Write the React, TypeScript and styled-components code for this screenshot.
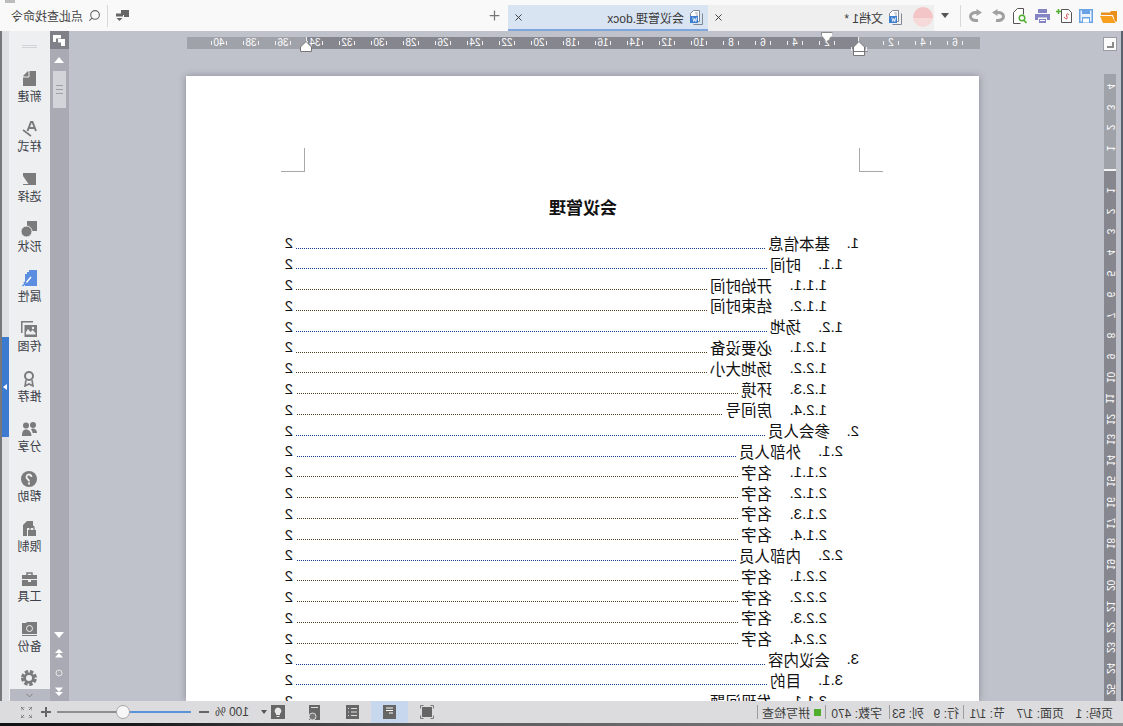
import styled, { createGlobalStyle } from 'styled-components';
import { Plus, Search, X, ChevronDown } from 'lucide-react';

const GlobalStyle = createGlobalStyle`
    html, body {
        margin: 0;
        padding: 0;
        overflow: hidden;
        background: #fff;
    }
    * {
        box-sizing: border-box;
    }
`;

const UI_FONT = '"Liberation Sans", "Noto Sans CJK SC", sans-serif';
const ICON = '#7b7b7b';

// the whole window is a mirror image, so it is laid out normally and flipped once here
const Mirror = styled.div`
    width: 1123px;
    height: 726px;
    overflow: hidden;
    transform: scaleX(-1);
    display: flex;
    flex-direction: column;
    font-family: ${UI_FONT};
    color: #333;
    background: #bfc2cb;
`;

const TitleBar = styled.header`
    position: relative;
    height: 31px;
    flex: none;
    display: flex;
    align-items: flex-end;
    background: #f9f9f9;

    &::after {
        content: '';
        position: absolute;
        top: 0;
        right: 5px;
        width: 10px;
        height: 3px;
        background: #bcbcbc;
    }
`;

const QuickBar = styled.div`
    width: 189px;
    height: 31px;
    flex: none;
    display: flex;
    align-items: center;
    padding-left: 6px;
`;

const QuickIcon = styled.span<{ $w: number }>`
    width: ${(p) => p.$w}px;
    flex: none;
    display: flex;
    align-items: center;
`;

const BarDivider = styled.span`
    width: 1px;
    height: 22px;
    background: #d8d8d8;
    flex: none;
`;

const Caret = styled.span<{ $small?: boolean }>`
    width: 0;
    height: 0;
    flex: none;
    margin-left: ${(p) => (p.$small ? 0 : 11)}px;
    border-left: ${(p) => (p.$small ? 3 : 4)}px solid transparent;
    border-right: ${(p) => (p.$small ? 3 : 4)}px solid transparent;
    border-top: ${(p) => (p.$small ? 4 : 5)}px solid #555;
`;

const Tab = styled.div<{ $active?: boolean; $w: number }>`
    width: ${(p) => p.$w}px;
    height: 26px;
    flex: none;
    display: flex;
    align-items: center;
    padding-left: ${(p) => (p.$active ? 5 : 0)}px;
    font-size: 12px;
    background: ${(p) => (p.$active ? '#d9e4f2' : '#efefef')};
    border-bottom: 2px solid ${(p) => (p.$active ? '#7ea6dd' : '#efefef')};
`;

const Avatar = styled.span`
    width: 20px;
    height: 20px;
    flex: none;
    margin: 0 11px 0 1px;
    border-radius: 50%;
    background: linear-gradient(#f4c5c6 55%, #f6d9d9 55%);
`;

const TabTitle = styled.span`
    margin-left: 5px;
    flex: 1;
    white-space: nowrap;
    color: #3a3a3a;
`;

const TabClose = styled.span`
    display: flex;
    margin-right: 5px;
    color: #333;
`;

const NewTab = styled.span`
    display: flex;
    margin-left: 6px;
    color: #777;
    align-self: center;
`;

const SearchBox = styled.div`
    margin-left: auto;
    height: 31px;
    display: flex;
    align-items: center;
    padding-right: 11px;
    font-size: 12px;
    color: #444;
`;

const SearchDivider = styled(BarDivider)`
    margin: 0 6px 0 8px;
`;

const SearchLabel = styled.span`
    margin-left: 5px;
    white-space: nowrap;
`;

const Body = styled.div`
    flex: 1;
    min-height: 0;
    display: flex;
    overflow: hidden;
`;

const Gutter = styled.div`
    width: 143px;
    flex: none;
    display: flex;
    flex-direction: column;
    padding-left: 4px;
    border-left: 2px solid #5d6270;
`;

const CornerButton = styled.div`
    width: 14px;
    height: 14px;
    margin-top: 6px;
    background: #fbfbfb;
    border: 1px solid #9b9da6;
    display: flex;
    align-items: flex-end;
    justify-content: flex-end;
    padding: 0 2px 2px 0;
`;

const CornerGlyph = styled.span`
    width: 7px;
    height: 6px;
    border-left: 2px solid #8a8a8a;
    border-bottom: 2px solid #8a8a8a;
    margin-right: 1px;
`;

const VRuler = styled.div`
    margin: 23px 0 0 1px;
    width: 12px;
    flex: 1;
    padding-top: 2px;
    display: flex;
    flex-direction: column;
    background: linear-gradient(#a0a2a9 95px, #f4f4f4 95px, #f4f4f4 97px, #85868e 97px);
    overflow: hidden;
`;

const VCell = styled.span`
    height: 20.8px;
    flex: none;
    display: flex;
    align-items: center;
    justify-content: center;
    font-size: 10px;
    color: #fff;
`;

const VLabel = styled.span`
    display: block;
    transform: rotate(-90deg);
    white-space: nowrap;
`;

const Canvas = styled.main`
    width: 911px;
    flex: none;
    display: flex;
    flex-direction: column;
`;

const HRuler = styled.div`
    position: relative;
    width: 793px;
    height: 12px;
    flex: none;
    margin-top: 6px;
    padding-left: 9px;
    display: flex;
    align-items: center;
    background: linear-gradient(
        90deg,
        #a0a2a9 121px,
        #f0f0f0 121px,
        #f0f0f0 122px,
        #85868e 122px,
        #85868e 673px,
        #f0f0f0 673px,
        #f0f0f0 674px,
        #a0a2a9 674px
    );
`;

const HCell = styled.span`
    position: relative;
    width: 32px;
    flex: none;
    text-align: center;
    font-size: 10px;
    line-height: 12px;
    color: #fff;

    &::before,
    &::after {
        content: '';
        position: absolute;
        top: 4px;
        width: 1px;
        height: 4px;
        background: #f0f0f0;
    }
    &::before {
        left: 8px;
    }
    &::after {
        right: 8px;
    }
`;

const Marker = styled.svg<{ $left: number; $top: number }>`
    position: absolute;
    left: ${(p) => p.$left}px;
    top: ${(p) => p.$top}px;
`;

const MarginTab = styled.span<{ $left: number }>`
    position: absolute;
    left: ${(p) => p.$left}px;
    top: 12px;
    width: 5px;
    height: 3px;
    border-right: 1px solid #8f9098;
    border-bottom: 1px solid #8f9098;
`;

const Page = styled.section`
    position: relative;
    width: 793px;
    flex: 1;
    margin: 27px 0 0 1px;
    padding: 120px 99px 0 120px;
    background: #fff;
    box-shadow: 0 0 7px rgba(70, 72, 84, 0.45);
    overflow: hidden;
    color: #111;
`;

const CropMark = styled.span<{ $side: 'left' | 'right' }>`
    position: absolute;
    top: 72px;
    ${(p) => (p.$side === 'left' ? 'left: 96px;' : 'left: 674px;')}
    width: 24px;
    height: 24px;
    border-bottom: 1px solid #a8a8a8;
    ${(p) => (p.$side === 'left' ? 'border-right: 1px solid #a8a8a8;' : 'border-left: 1px solid #a8a8a8;')}
`;

const DocTitle = styled.h1`
    margin: 0 22px 10.6px 0;
    height: 26px;
    line-height: 26px;
    text-align: center;
    font-size: 17px;
    font-weight: 700;
`;

const TocRow = styled.div<{ $level: number }>`
    height: 20.8px;
    display: flex;
    align-items: center;
    padding-left: ${(p) => (p.$level - 1) * 16}px;
    font-size: 15px;
    white-space: nowrap;
`;

const TocNumber = styled.span<{ $level: number }>`
    width: ${(p) => [29, 42, 55][p.$level - 1]}px;
    flex: none;
`;

const TocText = styled.span`
    font-size: 15.5px;
    flex: none;
`;

const TocLeader = styled.span<{ $level: number }>`
    flex: 1;
    align-self: flex-start;
    height: 1px;
    margin: 15px 3px 0 3px;
    background: repeating-linear-gradient(
        90deg,
        ${(p) => (p.$level === 3 ? '#4f3c1c' : '#0f3f8c')} 0 1px,
        transparent 1px 2px
    );
`;

const TocPage = styled.span`
    flex: none;
    width: 8px;
`;

const ScrollBar = styled.div`
    width: 19px;
    flex: none;
    display: flex;
    flex-direction: column;
    align-items: center;
    background: #a9aab4;
`;

const ScrollTop = styled.div`
    width: 100%;
    height: 18px;
    flex: none;
    background: #7f8088;
    display: flex;
    align-items: center;
    justify-content: center;
`;

const ScrollArrow = styled.div<{ $h: number }>`
    height: ${(p) => p.$h}px;
    flex: none;
    display: flex;
    align-items: center;
    justify-content: center;
`;

const ScrollThumb = styled.div`
    width: 13px;
    height: 37px;
    flex: none;
    background: #d3d4d9;
    display: flex;
    flex-direction: column;
    align-items: center;
    justify-content: center;
    gap: 3px;
`;

const ThumbLine = styled.span`
    width: 7px;
    height: 1px;
    background: #9d9ea6;
`;

const ScrollGap = styled.div`
    flex: 1;
`;

const SideBar = styled.nav`
    width: 41px;
    flex: none;
    display: flex;
    flex-direction: column;
    background: #eeeff1;
`;

const SideGrip = styled.div`
    height: 35px;
    flex: none;
    padding-top: 14px;
    display: flex;
    flex-direction: column;
    align-items: center;
    gap: 1px;
`;

const GripLine = styled.span`
    width: 15px;
    height: 1px;
    background: #d2d3d6;
`;

const SideItem = styled.div`
    height: 50px;
    flex: none;
    padding-top: 3px;
    display: flex;
    flex-direction: column;
    align-items: center;
`;

const SideIcon = styled.span`
    height: 19px;
    flex: none;
    display: flex;
    align-items: center;
    justify-content: center;
`;

const SideLabel = styled.span`
    height: 14px;
    margin-top: 2px;
    font-size: 12px;
    line-height: 14px;
    color: #3c4048;
    white-space: nowrap;
`;

const SideGear = styled.div`
    height: 23px;
    flex: none;
    display: flex;
    align-items: center;
    justify-content: center;
`;

const SideCollapse = styled.div`
    height: 12px;
    flex: none;
    margin-right: 1px;
    background: #b8bac3;
    color: #777;
    display: flex;
    align-items: center;
    justify-content: center;
`;

const HandleRail = styled.div`
    width: 7px;
    flex: none;
    background: #dfe0e3;
    padding-top: 306px;
`;

const Handle = styled.div`
    height: 100px;
    background: #3d7bd0;
    display: flex;
    align-items: center;
    justify-content: center;
`;

const HandleArrow = styled.span`
    width: 0;
    height: 0;
    border-top: 3px solid transparent;
    border-bottom: 3px solid transparent;
    border-left: 4px solid #fff;
`;

const WindowEdge = styled.div`
    width: 2px;
    flex: none;
    background: #77787c;
`;

const StatusBar = styled.footer`
    height: 22px;
    flex: none;
    display: flex;
    align-items: center;
    padding-left: 10px;
    background: #dcdcde;
    font-size: 12px;
    color: #3c3c3c;
    white-space: nowrap;
`;

const StatusField = styled.span<{ $w: number }>`
    width: ${(p) => p.$w}px;
    flex: none;
`;

const StatusDivider = styled.span<{ $gap: number }>`
    width: 1px;
    height: 14px;
    flex: none;
    margin-right: ${(p) => p.$gap}px;
    background: #9c9c9e;
`;

const SpellDot = styled.span`
    width: 7px;
    height: 7px;
    flex: none;
    margin-right: 4px;
    background: #4fae2e;
`;

const StatusSlot = styled.span<{ $ml: number; $active?: boolean; $w?: number }>`
    margin-left: ${(p) => p.$ml}px;
    ${(p) => (p.$w ? `width: ${p.$w}px;` : '')}
    height: 22px;
    flex: none;
    display: flex;
    align-items: center;
    justify-content: center;
    background: ${(p) => (p.$active ? '#c6d7ee' : 'transparent')};
`;

const ZoomSlider = styled.span`
    position: relative;
    width: 134px;
    height: 2px;
    margin-left: 8px;
    flex: none;
    background: linear-gradient(90deg, #5b93d8 68px, #8e8e90 68px);
`;

const ZoomKnob = styled.span`
    position: absolute;
    left: 61px;
    top: -6px;
    width: 14px;
    height: 14px;
    border-radius: 50%;
    background: #f7f7f7;
    border: 1px solid #a6a6a8;
`;

const ZoomBtn = styled.span`
    width: 10px;
    height: 10px;
    flex: none;
    display: flex;
    align-items: center;
    justify-content: center;
    margin-left: 6px;
    position: relative;
`;

const ZoomBar = styled.span<{ $vertical?: boolean }>`
    position: absolute;
    background: #666;
    ${(p) => (p.$vertical ? 'width: 2px; height: 10px;' : 'width: 10px; height: 2px;')}
`;

const BottomEdge = styled.div`
    height: 3px;
    flex: none;
    background: linear-gradient(90deg, #8c8c8c, #5b5b5b 60%, #1a1a1a 88%, #111);
`;

const toc: [number, string, string][] = [
    [1, '1.', '基本信息'],
    [2, '1.1.', '时间'],
    [3, '1.1.1.', '开始时间'],
    [3, '1.1.2.', '结束时间'],
    [2, '1.2.', '场地'],
    [3, '1.2.1.', '必要设备'],
    [3, '1.2.2.', '场地大小'],
    [3, '1.2.3.', '环境'],
    [3, '1.2.4.', '房间号'],
    [1, '2.', '参会人员'],
    [2, '2.1.', '外部人员'],
    [3, '2.1.1.', '名字'],
    [3, '2.1.2.', '名字'],
    [3, '2.1.3.', '名字'],
    [3, '2.1.4.', '名字'],
    [2, '2.2.', '内部人员'],
    [3, '2.2.1.', '名字'],
    [3, '2.2.2.', '名字'],
    [3, '2.2.3.', '名字'],
    [3, '2.2.4.', '名字'],
    [1, '3.', '会议内容'],
    [2, '3.1.', '目的'],
    [3, '3.1.1.', '发现问题'],
];

const hLabels = ['6', '4', '2', '', ...Array.from({ length: 20 }, (_, i) => String((i + 1) * 2))];
const vLabels = ['4', '3', '2', '1', '', ...Array.from({ length: 26 }, (_, i) => String(i + 1))];

const DocBadgeIcon = () => (
    <svg width="14" height="15" viewBox="0 0 14 15">
        <path d="M3.5 .5h6l3 3v8h-9z" fill="#fff" stroke="#7d8796" />
        <path d="M.5 3.5v11h9" fill="none" stroke="#7d8796" />
        <path d="M5 3h3M5 5h2" stroke="#a0a8b4" />
        <rect x="5" y="6" width="8" height="7" fill="#3f7fd0" />
        <path d="M6.2 7.5l1 4 1-3 1 3 1-4" fill="none" stroke="#fff" strokeWidth=".8" />
    </svg>
);

const FolderIcon = () => (
    <svg width="17" height="14" viewBox="0 0 17 14">
        <path d="M0 2h6l1 1.5h9V6H4L2 12.5H0z" fill="#e8901a" />
        <path d="M5 7h12l-3 7H1.500z" fill="#f99f1e" />
    </svg>
);

const SaveIcon = () => (
    <svg width="14" height="14" viewBox="0 0 14 14">
        <path d="M.75.75h12.500v12.500H.75z" fill="#eaf2fc" stroke="#6aa2e6" strokeWidth="1.500" />
        <path d="M3 1h8v4H3zM3 8h8v5H3z" fill="#6aa2e6" />
        <path d="M4 9.500h6v4H4z" fill="#fff" />
    </svg>
);

const NewDocIcon = () => (
    <svg width="16" height="15" viewBox="0 0 16 15">
        <path d="M3.500 1.500h7v13h-10v-10z" fill="#fff" stroke="#555" />
        <path d="M3 7c2-3 3 0 2 2s1 3 3 0" fill="none" stroke="#d2444a" />
        <path d="M11 3.500h5M13.500 1v5" stroke="#4fae2e" strokeWidth="1.500" />
    </svg>
);

const PrinterIcon = () => (
    <svg width="15" height="14" viewBox="0 0 15 14">
        <path d="M3 0h9v4H3z" fill="#8585c5" />
        <path d="M0 5h15v6h-3V8.500H3V11H0z" fill="#8585c5" />
        <path d="M4 10h7v4H4z" fill="#8585c5" />
        <path d="M5 11.500h5" stroke="#fff" />
    </svg>
);

const PreviewIcon = () => (
    <svg width="14" height="16" viewBox="0 0 14 16">
        <path d="M3.500.5h6l4 4v11h-7" fill="#fff" stroke="#555" />
        <path d="M3.500.5v6" stroke="#555" />
        <circle cx="5" cy="10" r="2.800" fill="none" stroke="#4fae2e" strokeWidth="1.400" />
        <path d="M3 12.500L.5 15" stroke="#4fae2e" strokeWidth="1.600" />
    </svg>
);

const TurnArrow = ({ back }: { back?: boolean }) => (
    <svg width="13" height="13" viewBox="0 0 13 13">
        <g transform={back ? 'translate(13 0) scale(-1 1)' : undefined}>
            <path d="M4 11.500C9 12 11.500 10 11.500 7.500S9 3.500 6 3.500H3" fill="none" stroke="#a0a0a0" strokeWidth="3" />
            <path d="M5.500 0L0 3.500 5.500 7z" fill="#a0a0a0" />
        </g>
    </svg>
);

const CommentIcon = () => (
    <svg width="13" height="11" viewBox="0 0 13 11">
        <path d="M0 0h8v5H5v2H0z" fill="#666" />
        <path d="M6 3.500h7v3H6z" fill="#666" />
        <path d="M6.500 8h6L9.500 11z" fill="#666" />
    </svg>
);

const PanelCornerIcon = () => (
    <svg width="12" height="11" viewBox="0 0 12 11">
        <path d="M4 0h8v7H9V3.500H4z" fill="#fff" />
        <path d="M0 4h7v3.500H4V11H0z" fill="#fff" />
    </svg>
);

const sideIcons: Record<string, React.ReactNode> = {
    新建: (
        <svg width="13" height="15" viewBox="0 0 13 15">
            <path d="M0 0h7l6 6v9H0z" fill={ICON} />
            <path d="M8 0l5 5H8z" fill={ICON} />
            <path d="M7 0v6h6" fill="none" stroke="#eeeff1" />
        </svg>
    ),
    样式: (
        <svg width="16" height="16" viewBox="0 0 16 16">
            <path d="M1 10L4.500 1h1.500l3.500 9M2.500 7h5.500" fill="none" stroke={ICON} strokeWidth="2" />
            <path d="M6 15l8-6" stroke={ICON} strokeWidth="1.600" />
        </svg>
    ),
    选择: (
        <svg width="13" height="12" viewBox="0 0 13 12">
            <path d="M0 0h13v12H0z" fill={ICON} />
            <path d="M13 3v8H7.500z" fill="#eeeff1" />
        </svg>
    ),
    形状: (
        <svg width="16" height="16" viewBox="0 0 16 16">
            <path d="M0 0h10v10H0z" fill={ICON} />
            <circle cx="10.500" cy="10.500" r="5.500" fill={ICON} stroke="#eeeff1" />
        </svg>
    ),
    属性: (
        <svg width="16" height="17" viewBox="0 0 16 17">
            <path d="M0 0h8v2h2v2h2v12H0z" fill="#5b8ee0" />
            <path d="M6 7l5 6" stroke="#fff" strokeWidth="1.400" />
            <path d="M10.500 12.500l4 3.500M13 12l-1.500 2" stroke="#5b8ee0" strokeWidth="1.600" />
        </svg>
    ),
    传图: (
        <svg width="16" height="16" viewBox="0 0 16 16">
            <path d="M4 .75h11.250V12" fill="none" stroke={ICON} strokeWidth="1.500" />
            <path d="M0 4h12.500v12H0z" fill={ICON} />
            <path d="M1.500 12l3-3 2 2 2.500-3 2 3v2.500h-9.500z" fill="#eeeff1" />
            <circle cx="4" cy="7" r="1.200" fill="#eeeff1" />
        </svg>
    ),
    推荐: (
        <svg width="12" height="16" viewBox="0 0 12 16">
            <circle cx="6" cy="5" r="4" fill="none" stroke={ICON} strokeWidth="2" />
            <path d="M3 9l-1 6 4-2 4 2-1-6" fill="none" stroke={ICON} strokeWidth="1.600" />
        </svg>
    ),
    分享: (
        <svg width="15" height="14" viewBox="0 0 15 14">
            <circle cx="4" cy="3" r="3" fill={ICON} />
            <circle cx="11" cy="3.500" r="3" fill={ICON} />
            <path d="M0 11c0-3 2-4.500 4-4.500 1 0 1.500.5 2 1-1 1-1.500 2-1.500 3.500H0zM5.500 14c0-4 2.500-6.500 5.500-6.500S15 10 15 14z" fill={ICON} />
        </svg>
    ),
    限制: (
        <svg width="13" height="15" viewBox="0 0 13 15">
            <path d="M3 0h6l4 4v11H9V7H3z" fill={ICON} />
            <path d="M0 9h8v6H0z" fill={ICON} />
            <path d="M2 9V7a2 2 0 0 1 4 0v2" fill="none" stroke={ICON} strokeWidth="1.300" />
        </svg>
    ),
    工具: (
        <svg width="15" height="14" viewBox="0 0 15 14">
            <path d="M5 3V1h5v2" fill="none" stroke={ICON} strokeWidth="1.500" />
            <path d="M0 3h15v4H0zM0 8h6v2h3V8h6v6H0z" fill={ICON} />
        </svg>
    ),
    备份: (
        <svg width="15" height="14" viewBox="0 0 15 14">
            <path d="M0 0h10l1 1h4v11H0z" fill={ICON} />
            <path d="M0 13h15v1H0z" fill={ICON} />
            <circle cx="7.500" cy="6.500" r="3" fill="none" stroke="#eeeff1" />
        </svg>
    ),
};

const sideItems = ['新建', '样式', '选择', '形状', '属性', '传图', '推荐', '分享', '帮助', '限制', '工具', '备份'];

const HelpIcon = () => (
    <svg width="16" height="16" viewBox="0 0 16 16">
        <circle cx="8" cy="8" r="8" fill={ICON} />
        <path d="M5.500 6a2.500 2.500 0 1 1 4 2c-1 .8-1.500 1-1.500 2.500" fill="none" stroke="#eeeff1" strokeWidth="1.800" />
        <path d="M7 11.500h2v2H7z" fill="#eeeff1" />
    </svg>
);

const GearIcon = () => (
    <svg width="16" height="16" viewBox="0 0 16 16">
        <circle cx="8" cy="8" r="6.300" fill="none" stroke={ICON} strokeWidth="3.400" strokeDasharray="3.300 1.650" />
        <circle cx="8" cy="8" r="4.300" fill="none" stroke={ICON} strokeWidth="2.600" />
    </svg>
);

const UpTriangle = () => (
    <svg width="10" height="6" viewBox="0 0 10 6">
        <path d="M5 0l5 6H0z" fill="#fff" />
    </svg>
);

const DownTriangle = () => (
    <svg width="10" height="6" viewBox="0 0 10 6">
        <path d="M5 6l5-6H0z" fill="#fff" />
    </svg>
);

const DoubleTriangle = ({ up }: { up?: boolean }) => (
    <svg width="8" height="9" viewBox="0 0 8 9">
        <g transform={up ? undefined : 'translate(0 9) scale(1 -1)'}>
            <path d="M4 0l4 4H0z" fill="#fff" />
            <path d="M4 4l4 4.500H0z" fill="#fff" />
        </g>
    </svg>
);

const FitPageIcon = () => (
    <svg width="14" height="14" viewBox="0 0 14 14">
        <path d="M.5 3.500v-3h3M10.500.5h3v3M13.500 10.500v3h-3M3.500 13.500h-3v-3" fill="none" stroke="#777" />
        <path d="M2 2h10v10H2z" fill="#666" />
    </svg>
);

const PageViewIcon = () => (
    <svg width="13" height="14" viewBox="0 0 13 14">
        <path d="M0 0h13v14H0z" fill="#666" />
        <path d="M3 3h7M3 5.500h7M3 8h4" stroke="#fff" />
    </svg>
);

const OutlineViewIcon = () => (
    <svg width="13" height="14" viewBox="0 0 13 14">
        <path d="M0 0h13v14H0z" fill="#666" />
        <path d="M2 3.500h6M10 3.500h1M2 7h6M10 7h1M2 10.500h6M10 10.500h1" stroke="#dcdcde" />
    </svg>
);

const WebViewIcon = () => (
    <svg width="13" height="15" viewBox="0 0 13 15">
        <path d="M2 0h11v15H2z" fill="#666" />
        <path d="M4 2.500h7" stroke="#dcdcde" />
        <circle cx="9.500" cy="11.500" r="3.500" fill="#777" stroke="#dcdcde" />
    </svg>
);

const BulbIcon = () => (
    <svg width="14" height="14" viewBox="0 0 14 14">
        <path d="M0 0h14v14H0z" fill="#666" />
        <path d="M7 2.500a3.500 3.500 0 0 0-2 6.300V10h4V8.800a3.500 3.500 0 0 0-2-6.300zM5.500 11h3v1h-3z" fill="#e8e8e8" />
    </svg>
);

const FullScreenIcon = () => (
    <svg width="11" height="11" viewBox="0 0 11 11">
        <path d="M0 3.500V0h3.500M7.500 0H11v3.500M11 7.500V11H7.500M3.500 11H0V7.500M0 0l3 3M11 0L8 3M11 11L8 8M0 11l3-3" fill="none" stroke="#777" />
    </svg>
);

const App = () => {
    return (
        <>
            <GlobalStyle />
            <Mirror>
                <TitleBar>
                    <QuickBar>
                        <QuickIcon $w={24}><FolderIcon /></QuickIcon>
                        <QuickIcon $w={21}><SaveIcon /></QuickIcon>
                        <QuickIcon $w={22}><NewDocIcon /></QuickIcon>
                        <QuickIcon $w={23}><PrinterIcon /></QuickIcon>
                        <QuickIcon $w={22}><PreviewIcon /></QuickIcon>
                        <QuickIcon $w={23}><TurnArrow back /></QuickIcon>
                        <QuickIcon $w={21}><TurnArrow /></QuickIcon>
                        <BarDivider />
                        <Caret />
                    </QuickBar>
                    <Tab $w={226}>
                        <Avatar />
                        <DocBadgeIcon />
                        <TabTitle>文档1 *</TabTitle>
                        <TabClose><X size={11} /></TabClose>
                    </Tab>
                    <Tab $w={200} $active>
                        <DocBadgeIcon />
                        <TabTitle>会议管理.docx</TabTitle>
                        <TabClose><X size={11} /></TabClose>
                    </Tab>
                    <NewTab><Plus size={15} /></NewTab>
                    <SearchBox>
                        <CommentIcon />
                        <SearchDivider />
                        <Search size={13} color="#666" />
                        <SearchLabel>点此查找命令</SearchLabel>
                    </SearchBox>
                </TitleBar>
                <Body>
                    <Gutter>
                        <CornerButton><CornerGlyph /></CornerButton>
                        <VRuler>
                            {vLabels.map((label, i) => (
                                <VCell key={i}><VLabel>{label}</VLabel></VCell>
                            ))}
                        </VRuler>
                    </Gutter>
                    <Canvas>
                        <HRuler>
                            {hLabels.map((label, i) => (
                                <HCell key={i}>{label}</HCell>
                            ))}
                            <MarginTab $left={112} />
                            <MarginTab $left={669} />
                            <Marker $left={147} $top={-5} width="12" height="12" viewBox="0 0 12 12">
                                <path d="M.5.5h11v3L8 8v3.500" fill="#fff" stroke="#888" />
                                <path d="M1 1h10v2.500L6 9 1 3.500z" fill="#fff" />
                            </Marker>
                            <Marker $left={115} $top={4} width="12" height="15" viewBox="0 0 12 15">
                                <path d="M6 .5L11.500 6v8.500H.5V6z" fill="#fff" stroke="#777" />
                                <path d="M.5 10.500h11" stroke="#777" />
                            </Marker>
                            <Marker $left={668} $top={4} width="12" height="11" viewBox="0 0 12 11">
                                <path d="M6 .5L11.500 6v4.500H.5V6z" fill="#fff" stroke="#777" />
                            </Marker>
                        </HRuler>
                        <Page>
                            <CropMark $side="left" />
                            <CropMark $side="right" />
                            <DocTitle>会议管理</DocTitle>
                            {toc.map(([level, number, text]) => (
                                <TocRow key={number} $level={level}>
                                    <TocNumber $level={level}>{number}</TocNumber>
                                    <TocText>{text}</TocText>
                                    <TocLeader $level={level} />
                                    <TocPage>2</TocPage>
                                </TocRow>
                            ))}
                        </Page>
                    </Canvas>
                    <ScrollBar>
                        <ScrollTop><PanelCornerIcon /></ScrollTop>
                        <ScrollArrow $h={22}><UpTriangle /></ScrollArrow>
                        <ScrollThumb>
                            <ThumbLine />
                            <ThumbLine />
                            <ThumbLine />
                        </ScrollThumb>
                        <ScrollGap />
                        <ScrollArrow $h={19}><DownTriangle /></ScrollArrow>
                        <ScrollArrow $h={19}><DoubleTriangle up /></ScrollArrow>
                        <ScrollArrow $h={19}>
                            <svg width="8" height="8" viewBox="0 0 8 8">
                                <circle cx="4" cy="4" r="3" fill="none" stroke="#e6e6e6" />
                            </svg>
                        </ScrollArrow>
                        <ScrollArrow $h={19}><DoubleTriangle /></ScrollArrow>
                    </ScrollBar>
                    <SideBar>
                        <SideGrip>
                            <GripLine />
                            <GripLine />
                        </SideGrip>
                        {sideItems.map((name) => (
                            <SideItem key={name}>
                                <SideIcon>{name === '帮助' ? <HelpIcon /> : sideIcons[name]}</SideIcon>
                                <SideLabel>{name}</SideLabel>
                            </SideItem>
                        ))}
                        <SideGear><GearIcon /></SideGear>
                        <SideCollapse><ChevronDown size={11} /></SideCollapse>
                    </SideBar>
                    <HandleRail>
                        <Handle><HandleArrow /></Handle>
                    </HandleRail>
                    <WindowEdge />
                </Body>
                <StatusBar>
                    <StatusField $w={49}>页码: 1</StatusField>
                    <StatusField $w={59}>页面: 1/7</StatusField>
                    <StatusField $w={41}>节: 1/1</StatusField>
                    <StatusDivider $gap={4} />
                    <StatusField $w={35}>行: 9</StatusField>
                    <StatusField $w={34}>列: 53</StatusField>
                    <StatusDivider $gap={7} />
                    <StatusField $w={56}>字数: 470</StatusField>
                    <StatusDivider $gap={4} />
                    <SpellDot />
                    <StatusField $w={52}>拼写检查</StatusField>
                    <StatusDivider $gap={0} />
                    <StatusSlot $ml={323}><FitPageIcon /></StatusSlot>
                    <StatusSlot $ml={12} $w={37} $active><PageViewIcon /></StatusSlot>
                    <StatusSlot $ml={12}><OutlineViewIcon /></StatusSlot>
                    <StatusSlot $ml={24}><WebViewIcon /></StatusSlot>
                    <StatusSlot $ml={24}><BulbIcon /></StatusSlot>
                    <StatusSlot $ml={4}><Caret $small /></StatusSlot>
                    <StatusSlot $ml={12}>100 %</StatusSlot>
                    <ZoomBtn><ZoomBar /></ZoomBtn>
                    <ZoomSlider><ZoomKnob /></ZoomSlider>
                    <ZoomBtn><ZoomBar /><ZoomBar $vertical /></ZoomBtn>
                    <StatusSlot $ml={9}><FullScreenIcon /></StatusSlot>
                </StatusBar>
                <BottomEdge />
            </Mirror>
        </>
    );
};

export default App;
